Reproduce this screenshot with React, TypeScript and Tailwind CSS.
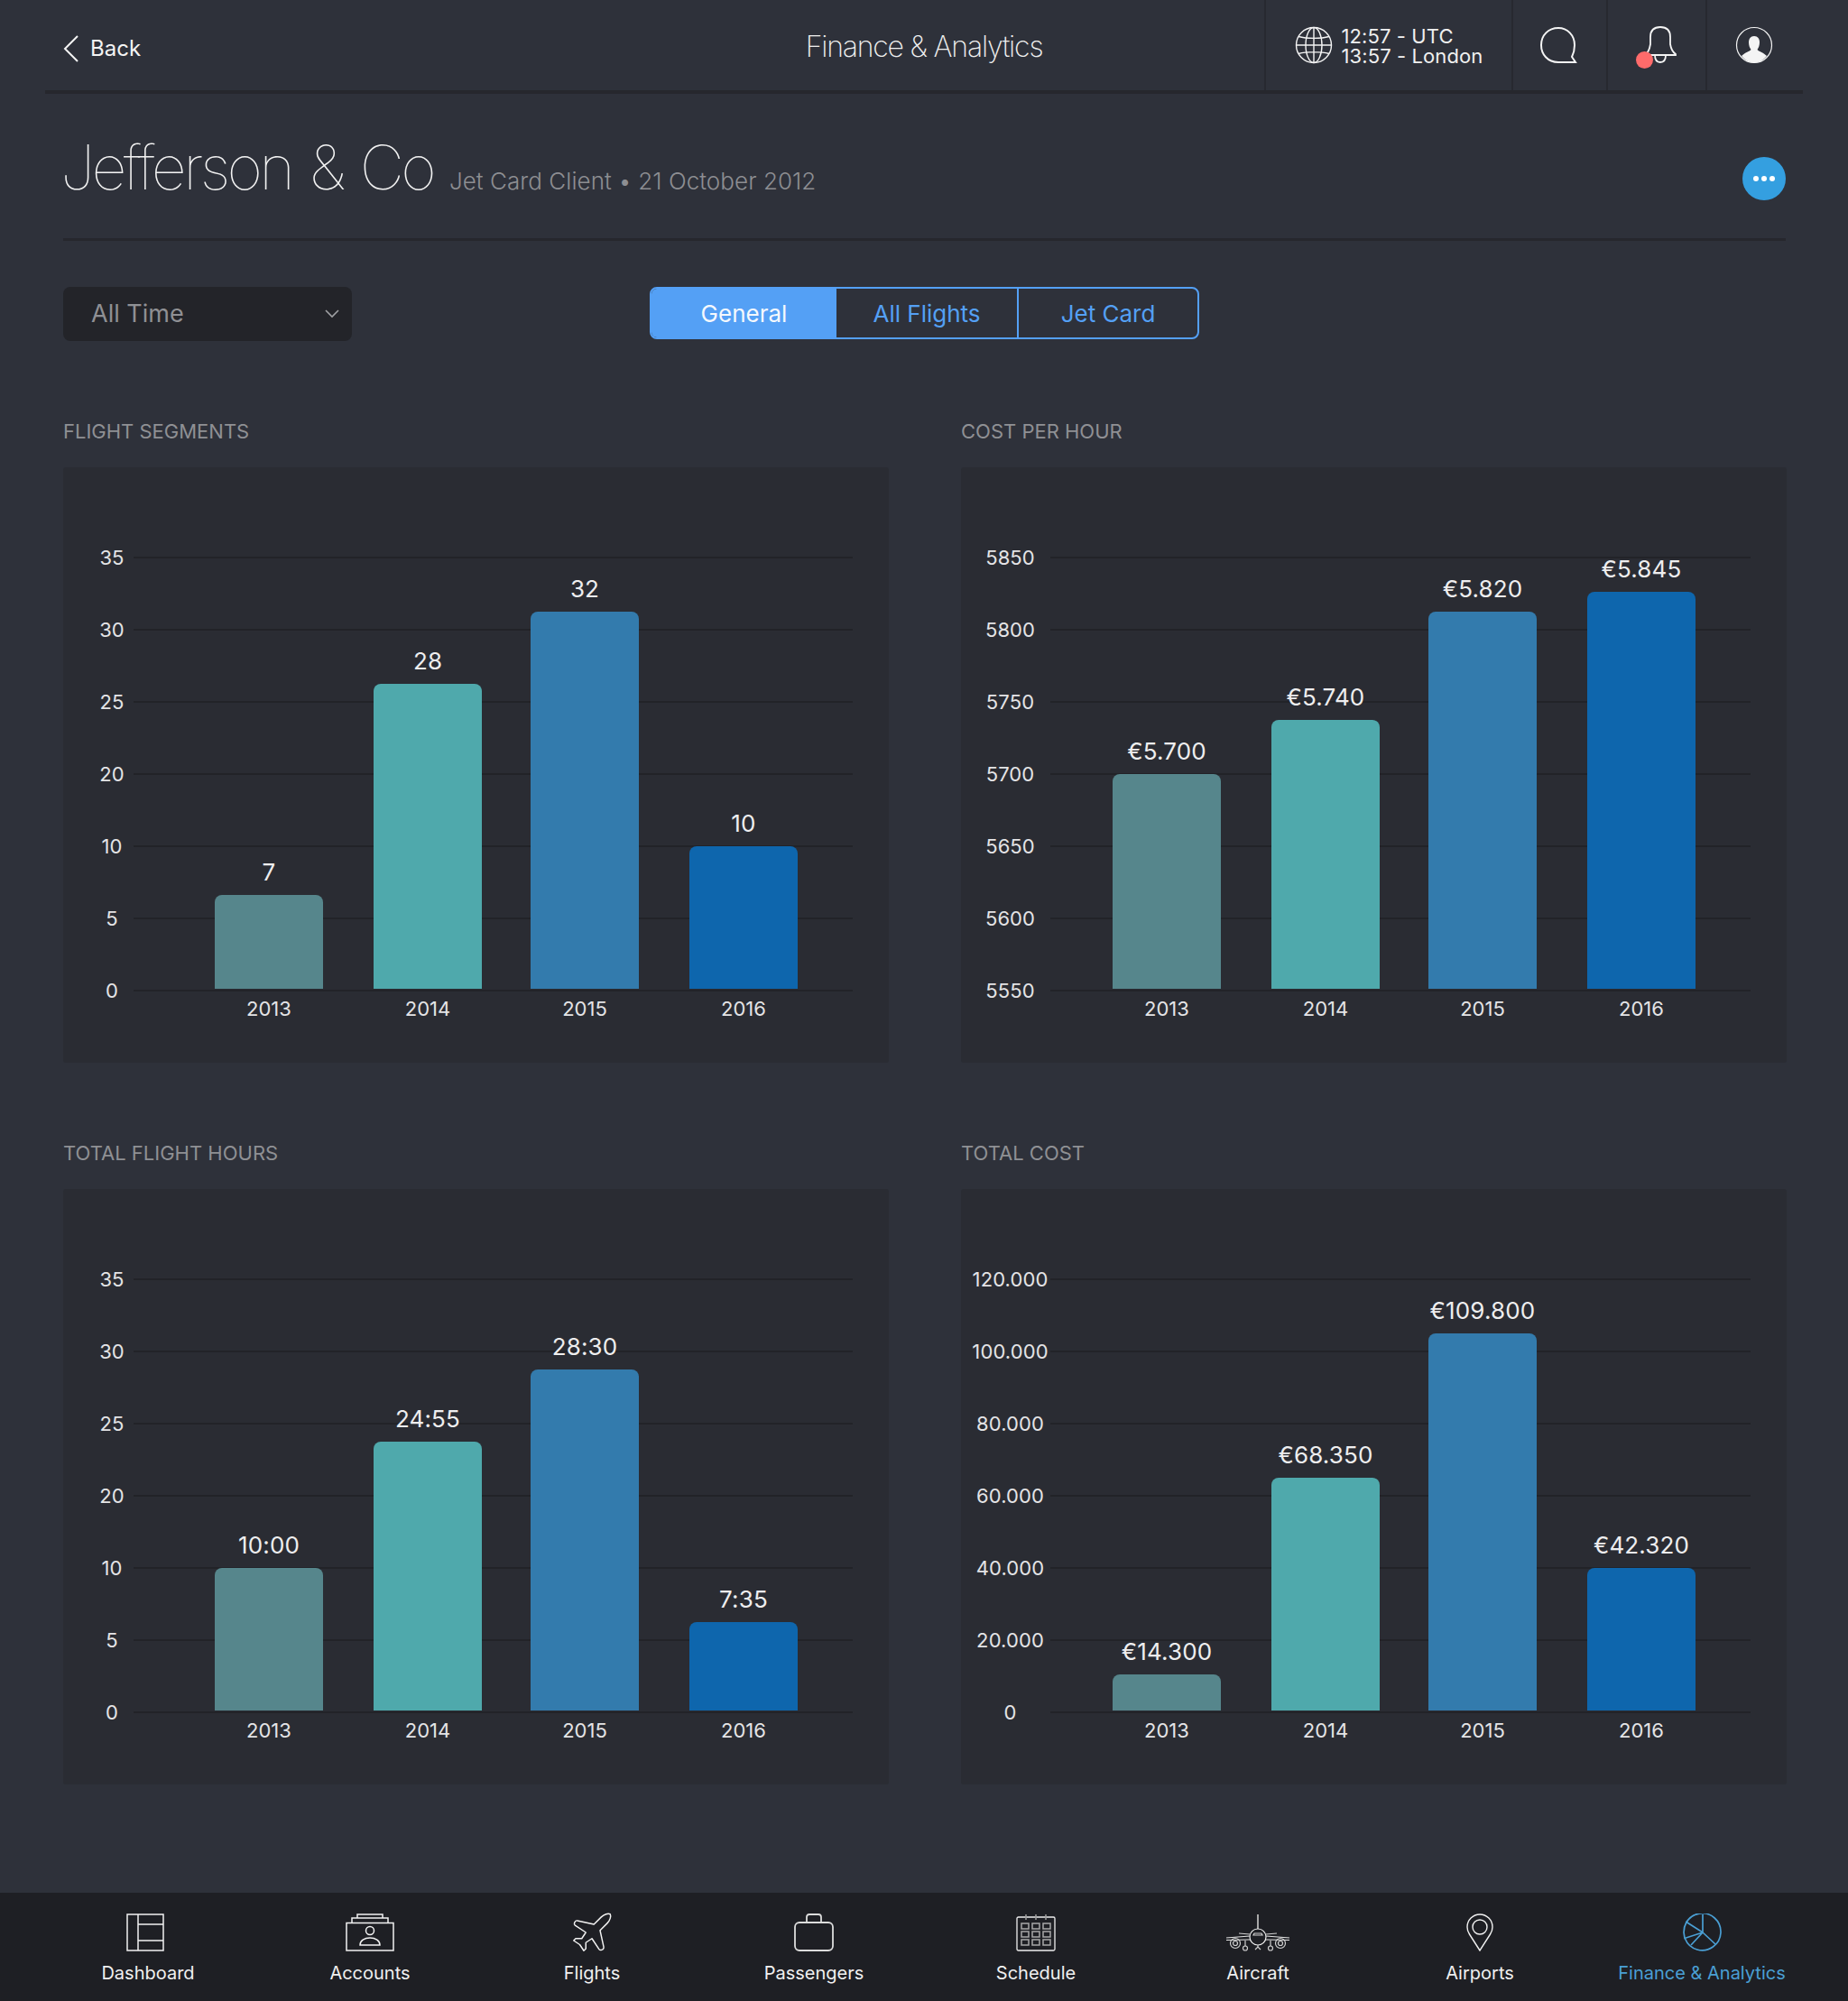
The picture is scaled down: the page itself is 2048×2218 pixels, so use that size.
import type { ReactNode } from "react";

type Bar = { value: string; year: string; height: number };

const barColors = ["bg-[#56868c]", "bg-[#4fa9ac]", "bg-[#337bad]", "bg-[#0e66ad]"];
const barGaps = ["", "ml-[56px]", "ml-[54px]", "ml-[56px]"];

const years = ["2013", "2014", "2015", "2016"];

function makeBars(values: string[], heights: number[]): Bar[] {
  return values.map((value, i) => ({ value, year: years[i], height: heights[i] }));
}

const charts = [
  {
    title: "FLIGHT SEGMENTS",
    wide: false,
    ticks: ["35", "30", "25", "20", "10", "5", "0"],
    bars: makeBars(["7", "28", "32", "10"], [104, 338, 418, 158]),
  },
  {
    title: "COST PER HOUR",
    wide: true,
    ticks: ["5850", "5800", "5750", "5700", "5650", "5600", "5550"],
    bars: makeBars(["€5.700", "€5.740", "€5.820", "€5.845"], [238, 298, 418, 440]),
  },
  {
    title: "TOTAL FLIGHT HOURS",
    wide: false,
    ticks: ["35", "30", "25", "20", "10", "5", "0"],
    bars: makeBars(["10:00", "24:55", "28:30", "7:35"], [158, 298, 378, 98]),
  },
  {
    title: "TOTAL COST",
    wide: true,
    ticks: ["120.000", "100.000", "80.000", "60.000", "40.000", "20.000", "0"],
    bars: makeBars(["€14.300", "€68.350", "€109.800", "€42.320"], [40, 258, 418, 158]),
  },
];

function Chart({ title, wide, ticks, bars }: (typeof charts)[number]) {
  return (
    <section>
      <h2 className="text-[22px] leading-[30px] text-[#8f9094] mb-[25px]">{title}</h2>
      <div className="relative h-[660px] bg-[#2a2c33] rounded-[3px] pt-[99px] pr-[40px]">
        {ticks.map((tick, i) => (
          <div key={i} className={i === ticks.length - 1 ? "flex h-[2px]" : "flex h-[80px]"}>
            <div
              className={
                wide
                  ? "w-[99px] pl-[10px] text-center text-[22px] leading-[24px] h-[24px] -mt-[11px] text-[#e4e4e6] tracking-[0.1px]"
                  : "w-[78px] pl-[30px] text-center text-[22px] leading-[24px] h-[24px] -mt-[11px] text-[#e4e4e6]"
              }
            >
              {tick}
            </div>
            <div className="flex-1 h-[2px] bg-[#222328]" />
          </div>
        ))}
        <div className="ml-[168px] mt-[7px] flex">
          {bars.map((bar, i) => (
            <div key={bar.year} className={`w-[120px] text-center text-[22px] leading-[24px] text-[#e4e4e6] ${barGaps[i]}`}>
              {bar.year}
            </div>
          ))}
        </div>
        {/* bars sit over the grid lines */}
        <div className="absolute left-[168px] top-[99px] h-[479px] flex items-end">
          {bars.map((bar, i) => (
            <div key={bar.year} className={`w-[120px] flex flex-col items-center ${barGaps[i]}`}>
              <div className="text-[26px] leading-[32px] mb-[9px] text-[#eeeeef] tracking-[0.15px]">{bar.value}</div>
              <div className={`w-full rounded-t-[8px] ${barColors[i]}`} style={{ height: bar.height }} />
            </div>
          ))}
        </div>
      </div>
    </section>
  );
}

function HeaderCell({ className, children }: { className: string; children: ReactNode }) {
  return <div className={`relative flex items-center justify-center border-l-2 border-[#272930] h-full ${className}`}>{children}</div>;
}

const navItems: { label: string; icon: ReactNode; active?: boolean }[] = [
  {
    label: "Dashboard",
    icon: (
      <svg width="42" height="42" viewBox="0 0 42 42" fill="none" stroke="#f2f2f2" strokeWidth="1.5" className="-ml-[6px]">
        <rect x="1" y="1" width="40" height="40" />
        <path d="M13 1V41M13 12H41M13 30H41" />
      </svg>
    ),
  },
  {
    label: "Accounts",
    icon: (
      <svg width="54" height="42" viewBox="0 0 54 42" fill="none" stroke="#f2f2f2" strokeWidth="1.5">
        <rect x="1" y="10.5" width="52" height="30.5" />
        <path d="M7 10V5H47V10M13 5V1H41V5" />
        <circle cx="27" cy="19" r="4.5" />
        <path d="M16 35C16 30 21 27 27 27C33 27 38 30 38 35Z" />
      </svg>
    ),
  },
  {
    label: "Flights",
    icon: (
      <svg width="54" height="54" viewBox="0 0 24 24" fill="none" stroke="#f2f2f2" strokeWidth="0.65" strokeLinejoin="round">
        <path d="M17.8 19.2 16 11l3.5-3.5C21 6 21.5 4 21 3c-1-.5-3 0-4.5 1.5L13 8 4.8 6.2c-.5-.1-.9.1-1.1.5l-.3.5c-.2.5-.1 1 .3 1.3L9 12l-2 3H4l-1 1 3 2 2 3 1-1v-3l3-2 3.5 5.3c.3.4.8.5 1.3.3l.5-.2c.4-.3.6-.7.5-1.2z" />
      </svg>
    ),
  },
  {
    label: "Passengers",
    icon: (
      <svg width="44" height="42" viewBox="0 0 44 42" fill="none" stroke="#dcdcdc" strokeWidth="1.8">
        <rect x="1" y="10" width="42" height="31" rx="5" />
        <path d="M14 10V4C14 2 15 1 17 1H27C29 1 30 2 30 4V10" />
      </svg>
    ),
  },
  {
    label: "Schedule",
    icon: (
      <svg width="44" height="42" viewBox="0 0 44 42" fill="none" stroke="#eeeeee" strokeWidth="1.3">
        <rect x="1" y="4" width="42" height="37" rx="1.5" />
        <path d="M11 1V7M22 1V7M33 1V7" stroke="#9c9c9c" strokeWidth="1.5" />
        <g stroke="#a8a8a8" strokeWidth="1.5">
          <rect x="6" y="11" width="8" height="6" />
          <rect x="18" y="11" width="8" height="6" />
          <rect x="30" y="11" width="8" height="6" />
          <rect x="6" y="20" width="8" height="6" />
          <rect x="18" y="20" width="8" height="6" />
          <rect x="30" y="20" width="8" height="6" />
          <rect x="6" y="29" width="8" height="6" />
          <rect x="18" y="29" width="8" height="6" />
          <rect x="30" y="29" width="8" height="6" />
        </g>
      </svg>
    ),
  },
  {
    label: "Aircraft",
    icon: (
      <svg width="72" height="42" viewBox="0 0 72 42" fill="none" stroke="#d0d0d0" strokeWidth="1.2">
        <path d="M36 1V17" strokeWidth="2" stroke="#a8a8a8" />
        <circle cx="36" cy="26" r="9" stroke="#eeeeee" />
        <path d="M31 24L32 22H40L41 24Z" />
        <path d="M27 25L1 27M27 29L1 29.5M45 25L71 27M45 29L71 29.5" stroke="#e4e4e4" />
        <path d="M15 22L27 23M57 22L45 23" />
        <circle cx="11" cy="33" r="5.5" />
        <circle cx="11" cy="33" r="2.5" />
        <circle cx="61" cy="33" r="5.5" />
        <circle cx="61" cy="33" r="2.5" />
        <path d="M22 30V36M50 30V36M36 35V38" />
        <circle cx="22" cy="38.5" r="2.5" />
        <circle cx="50" cy="38.5" r="2.5" />
        <path d="M33 40L36 37L39 40" />
      </svg>
    ),
  },
  {
    label: "Airports",
    icon: (
      <svg width="30" height="42" viewBox="0 0 30 42" fill="none" stroke="#f0f0f0" strokeWidth="1.4">
        <path d="M15 41L3.5 23C1.8 20.5 1 18 1 15C1 7.3 7.3 1 15 1C22.7 1 29 7.3 29 15C29 18 28.2 20.5 26.5 23Z" />
        <circle cx="15" cy="15" r="8" />
      </svg>
    ),
  },
  {
    label: "Finance & Analytics",
    active: true,
    icon: (
      <svg width="44" height="42" viewBox="0 0 44 42" fill="none" stroke="#4a9fd4" strokeWidth="1.7">
        <path d="M4.5 10.5A20.5 20.5 0 1 1 3.5 28" />
        <path d="M23 1V21L37 34M23 21L10 35M23 21L3 27.5L2 21C2 17 3 13 5 9.5L23 21" />
      </svg>
    ),
  },
];

export default function App() {
  return (
    <div className="min-h-[2218px] flex flex-col bg-[#2e313a] text-white font-['Inter','Liberation_Sans',sans-serif]">
      <header className="mx-[50px] h-[104px] border-b-4 border-[#26272d] grid grid-cols-[1fr_auto_1fr] items-center">
        <div className="flex items-center pl-[20px] pt-[8px] gap-[13px] text-[24px] text-[#f4f4f4]">
          <svg width="18" height="30" viewBox="0 0 18 30" fill="none" stroke="#f4f4f4" strokeWidth="2">
            <path d="M16 1L2 15L16 29" />
          </svg>
          <span className="-ml-[1px]">Back</span>
        </div>
        <div className="text-[32px] font-extralight tracking-[-1.2px] text-[#f0f0f0] pt-[4px]">Finance &amp; Analytics</div>
        <div className="flex justify-end h-full">
          <HeaderCell className="w-[274px] gap-[10px]">
            <svg width="42" height="42" viewBox="0 0 42 42" fill="none" stroke="#f4f4f4" strokeWidth="1.4" className="-mt-[1px]">
              <circle cx="21" cy="21" r="19.5" />
              <ellipse cx="21" cy="21" rx="9" ry="19.5" />
              <path d="M21 1.5V40.5M1.5 21H40.5M4 11.5C13 14 29 14 38 11.5M4 30.5C13 28 29 28 38 30.5" />
            </svg>
            <div className="text-[22px] leading-[22px] text-[#f0f0f0] tracking-[0.1px] pt-[2px]">
              <div>12:57 - UTC</div>
              <div>13:57 - London</div>
            </div>
          </HeaderCell>
          <HeaderCell className="w-[105px]">
            <svg width="42" height="42" viewBox="0 0 42 42" fill="none" stroke="#f4f4f4" strokeWidth="2" className="-ml-[3px]">
              <path d="M40 40H21C9 40 2 31 2 21C2 10 10 2 21 2C31 2 39 10 39 21C39 26 38 30 36 34Z" />
            </svg>
          </HeaderCell>
          <HeaderCell className="w-[110px]">
            <svg width="36" height="42" viewBox="0 0 36 42" fill="none" stroke="#f4f4f4" strokeWidth="1.8" className="ml-[7px]">
              <path d="M1 32C4 30 6 26 7 20V12C7 5 11 1 18 1C25 1 29 5 29 12V20C30 26 32 29 35 31V32Z" />
              <path d="M12 32C12 37 14 40 18 40C22 40 24 37 24 32" />
            </svg>
            <div className="absolute left-[31px] top-[57px] w-[19px] h-[19px] rounded-full bg-[#ff6b6b]" />
          </HeaderCell>
          <HeaderCell className="w-[108px]">
            <svg width="42" height="42" viewBox="0 0 42 42" fill="none" className="-ml-[3px]">
              <circle cx="21" cy="21" r="19.5" stroke="#f4f4f4" strokeWidth="1.2" />
              <path
                d="M21 11C25 11 27 14 27 18C27 21 26 24 24.5 26C26 28 31 29 35 33C31 38 26 40.5 21 40.5C16 40.5 11 38 7 33C11 29 16 28 17.5 26C16 24 15 21 15 18C15 14 17 11 21 11Z"
                fill="#f4f4f4"
              />
            </svg>
          </HeaderCell>
        </div>
      </header>

      <main className="flex-1 pl-[70px] pr-[69px]">
        <div className="h-[163px] pt-[41px] flex items-baseline border-b-[3px] border-[#26272d]">
          <h1 className="-ml-[3px] text-[68px] leading-[80px] font-thin tracking-[-3.6px] [word-spacing:4px] text-[#f2f2f2]">Jefferson &amp; Co</h1>
          <span className="ml-[18px] text-[26px] font-light tracking-[0.05px] text-[#8d8e92]">Jet Card Client • 21 October 2012</span>
          <button className="ml-auto self-start mt-[29px] w-[48px] h-[48px] rounded-full bg-[#349fe0] flex items-center justify-center gap-[3px]">
            <span className="w-[6px] h-[6px] rounded-full bg-white" />
            <span className="w-[6px] h-[6px] rounded-full bg-white" />
            <span className="w-[6px] h-[6px] rounded-full bg-white" />
          </button>
        </div>

        <div className="mt-[51px] flex items-start">
          <div className="w-[320px] h-[60px] rounded-[8px] bg-[#232429] flex items-center justify-between pl-[31px] pr-[14px] text-[27px] text-[#8f9094]">
            <span>All Time</span>
            <svg width="16" height="10" viewBox="0 0 16 10" fill="none" stroke="#a0a1a4" strokeWidth="1.6">
              <path d="M1 1L8 8L15 1" />
            </svg>
          </div>
          <div className="ml-[330px] w-[609px] h-[58px] flex rounded-[8px] border-2 border-[#54a0f5] text-[26px] text-[#54a0f5] overflow-hidden">
            <div className="w-[205px] bg-[#54a0f5] text-[#f4f8fd] flex items-center justify-center">General</div>
            <div className="w-[202px] border-r-2 border-[#54a0f5] flex items-center justify-center">All Flights</div>
            <div className="flex-1 flex items-center justify-center">Jet Card</div>
          </div>
        </div>

        <div className="mt-[85px] grid grid-cols-[915px_915px] gap-x-[80px] gap-y-[85px]">
          {charts.map((chart) => (
            <Chart key={chart.title} {...chart} />
          ))}
        </div>
      </main>

      <nav className="h-[120px] bg-[#1e1f24] pl-[41px] pr-[39px] grid grid-cols-8">
        {navItems.map((item) => (
          <div key={item.label} className="flex flex-col items-center pt-[23px]">
            <div className="h-[42px] flex items-center justify-center">{item.icon}</div>
            <span className={item.active ? "mt-[10px] text-[20px] leading-[28px] text-[#4a9fd4]" : "mt-[10px] text-[20px] leading-[28px] text-[#f0f0f0]"}>
              {item.label}
            </span>
          </div>
        ))}
      </nav>
    </div>
  );
}
